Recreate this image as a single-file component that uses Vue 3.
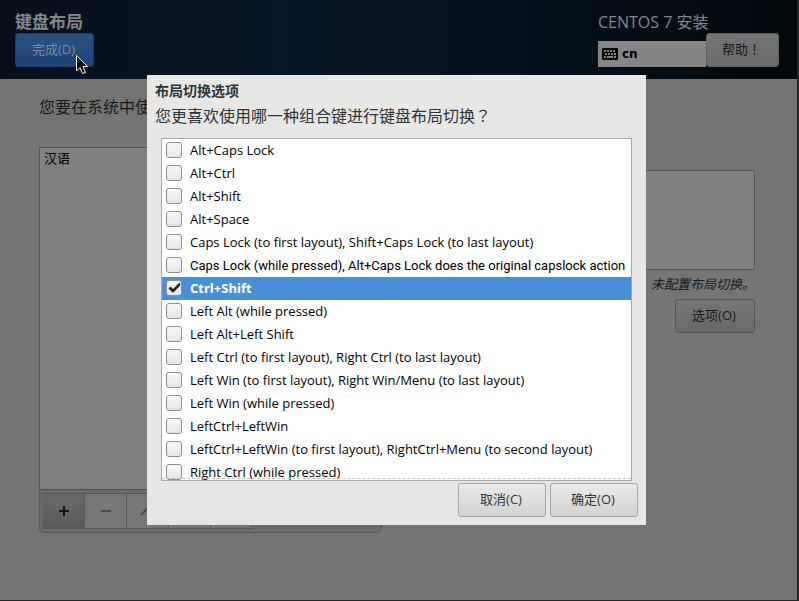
<template>
  <div class="screen">
    <header class="topbar">
      <div class="topbar-left">
        <h1 class="spoke-title">键盘布局</h1>
        <button class="btn btn-done" type="button">完成(D)</button>
      </div>
      <div class="topbar-right">
        <div class="product">CENTOS 7 安装</div>
        <div class="topbar-tools">
          <div class="kbd-indicator">
            <svg class="kbd-icon" viewBox="0 0 16 12" aria-hidden="true">
              <rect width="16" height="12" rx="1" fill="#000" />
              <path d="M2 3h12M3 6h11" stroke="#858585" stroke-width="2" stroke-dasharray="2 1" />
              <path d="M2 9h2M5 9h6M12 9h2" stroke="#858585" stroke-width="2" />
            </svg>
            <span>cn</span>
          </div>
          <button class="btn btn-help" type="button">帮助<span class="mark">！</span></button>
        </div>
      </div>
    </header>

    <main class="content">
      <p class="question">您要在系统中使</p>
      <div class="columns">
        <section class="layouts">
          <ul class="layout-list">
            <li>汉语</li>
          </ul>
          <div class="toolbar">
            <button v-for="tool in tools" :key="tool.name" class="tool" type="button"
                    :class="{ active: tool.enabled }" :aria-label="tool.name">
              <svg viewBox="0 0 16 16" aria-hidden="true"><path :d="tool.path" /></svg>
            </button>
          </div>
        </section>
        <section class="test">
          <textarea aria-label="测试布局配置"></textarea>
          <p class="switch-note">未配置布局切换。</p>
          <button class="btn btn-options" type="button">选项(O)</button>
        </section>
      </div>
    </main>

    <div class="overlay">
      <div class="dialog" role="dialog" aria-labelledby="dialog-title">
        <h2 id="dialog-title" class="dialog-title">布局切换选项</h2>
        <p class="dialog-text">您更喜欢使用哪一种组合键进行键盘布局切换<span class="mark">？</span></p>
        <div class="option-frame">
          <div class="option-list">
            <label v-for="option in options" :key="option" class="option"
                   :class="{ selected: chosen.includes(option), long: option.length > 70 }">
              <span class="check">
                <input v-model="chosen" type="checkbox" :value="option">
                <svg v-if="chosen.includes(option)" viewBox="0 0 16 16" aria-hidden="true">
                  <path d="M2.500 8.500 L4.500 6.500 L7 9 L13.500 2.500 L14.500 5 L7.500 12.500 H6.500 Z" />
                </svg>
              </span>
              <span>{{ option }}</span>
            </label>
          </div>
        </div>
        <div class="dialog-actions">
          <button class="btn" type="button">取消(C)</button>
          <button class="btn" type="button">确定(O)</button>
        </div>
      </div>
    </div>

    <svg class="pointer" viewBox="0 0 14 21" aria-hidden="true">
      <path d="M1.500 1.500 V17 L5 13.500 L7.500 19.500 L10.500 18.500 L8 12.500 H12.500 Z" />
    </svg>
  </div>
</template>

<script setup>
import { ref } from 'vue'

const options = [
  'Alt+Caps Lock',
  'Alt+Ctrl',
  'Alt+Shift',
  'Alt+Space',
  'Caps Lock (to first layout), Shift+Caps Lock (to last layout)',
  'Caps Lock (while pressed), Alt+Caps Lock does the original capslock action',
  'Ctrl+Shift',
  'Left Alt (while pressed)',
  'Left Alt+Left Shift',
  'Left Ctrl (to first layout), Right Ctrl (to last layout)',
  'Left Win (to first layout), Right Win/Menu (to last layout)',
  'Left Win (while pressed)',
  'LeftCtrl+LeftWin',
  'LeftCtrl+LeftWin (to first layout), RightCtrl+Menu (to second layout)',
  'Right Ctrl (while pressed)'
]

const chosen = ref(['Ctrl+Shift'])

const tools = [
  { name: '添加', enabled: true, path: 'M3 8H13M8 3V13' },
  { name: '删除', enabled: false, path: 'M3 8H13' },
  { name: '上移', enabled: false, path: 'M1 12L8 5L15 12' },
  { name: '下移', enabled: false, path: 'M1 5L8 12L15 5' },
  { name: '预览', enabled: false, path: 'M2 4H14V12H2Z' }
]
</script>

<style>
body {
  margin: 0;
  background: #747474;
}
</style>

<style scoped>
.screen {
  position: relative;
  box-sizing: border-box;
  min-height: 100vh;
  border-right: 2px solid #252525;
  border-bottom: 1px solid #252525;
  background: #747474;
  color: #171a1b;
  font-family: "Open Sans", "Noto Sans CJK SC", sans-serif;
  font-size: 13px;
  overflow: hidden;
}

h1, h2, p, ul {
  margin: 0;
  padding: 0;
}

.mark {
  font-family: "Noto Sans CJK TC", sans-serif;
  line-height: 1;
}

.topbar {
  display: flex;
  justify-content: space-between;
  box-sizing: border-box;
  height: 79px;
  padding: 11px 18px 12px 15px;
  background: linear-gradient(90deg, #070f1c 0%, #08172a 35%, #05111d 70%, #02090c 100%);
}

.topbar-left,
.topbar-right {
  display: flex;
  flex-direction: column;
  justify-content: space-between;
  align-items: flex-start;
}

.spoke-title {
  color: #858789;
  font-size: 17px;
  line-height: 22px;
}

.product {
  color: #858789;
  font-size: 16px;
  line-height: 22px;
}

.topbar-tools {
  display: flex;
  align-items: flex-end;
}

.kbd-indicator {
  display: flex;
  align-items: center;
  gap: 4px;
  box-sizing: border-box;
  width: 108px;
  height: 26px;
  padding-left: 4px;
  background: #858585;
  color: #000;
  font-family: "DejaVu Sans", sans-serif;
  font-size: 12px;
  font-weight: bold;
}

.kbd-icon {
  width: 16px;
  height: 12px;
}

.btn {
  box-sizing: border-box;
  width: 88px;
  height: 34px;
  padding: 0 2px 3px 0;
  border: 1px solid #a6a6a6;
  border-radius: 3px;
  background: linear-gradient(#eaeaea, #d3d3d2);
  color: #2e3436;
  font: inherit;
}

.btn-done {
  width: 79px;
  border-color: #173f6b;
  background: linear-gradient(#275482, #1c4474);
  color: #7f8b97;
}

.btn-help {
  width: 73px;
  border-color: #606060;
  background: linear-gradient(#757575, #696969);
  color: #171a1b;
}

.content {
  padding: 16px 42px 0 39px;
}

.question {
  font-size: 16px;
  line-height: 24px;
}

.columns {
  display: flex;
  justify-content: space-between;
  gap: 32px;
  padding-top: 28px;
}

.layouts {
  flex: 0 1 343px;
}

.layout-list {
  box-sizing: border-box;
  height: 343px;
  border: 1px solid #545454;
  background: #808080;
  color: #000;
  list-style: none;
}

.layout-list li {
  padding: 0 4px;
  line-height: 20px;
}

.toolbar {
  display: flex;
  padding: 3px;
  border: 1px solid #575757;
  border-top: 0;
  border-radius: 0 0 5px 5px;
  background: #6b6b6a;
}

.tool {
  display: grid;
  place-items: center;
  box-sizing: border-box;
  width: 42px;
  height: 36px;
  padding: 0;
  border: 1px solid #5b5b5b;
  border-left: 0;
  background: #767676;
}

.tool.active {
  background: linear-gradient(#6a6a69, #5b5b59);
}

.tool svg {
  width: 16px;
  height: 16px;
  fill: none;
  stroke: #464849;
  stroke-width: 2;
}

.tool.active svg {
  stroke: #101213;
}

.test {
  display: flex;
  flex: 0 1 341px;
  flex-direction: column;
  align-items: flex-end;
  padding-top: 23px;
}

.test textarea {
  box-sizing: border-box;
  width: 100%;
  height: 100px;
  border: 1px solid #555;
  border-radius: 2px;
  background: #808080;
  font: inherit;
  resize: none;
}

.switch-note {
  font-style: italic;
  line-height: 29px;
}

.btn-options {
  width: 80px;
  border-color: #545454;
  background: linear-gradient(#757574, #696968);
  color: #171a1b;
}

.overlay {
  position: absolute;
  inset: 0;
  display: flex;
  align-items: center;
  justify-content: center;
  padding-right: 4px;
}

.dialog {
  box-sizing: border-box;
  width: 499px;
  max-width: 100%;
  padding: 4px 8px 8px;
  background: #e7e7e6;
  color: #2e3436;
}

.dialog-title {
  font-size: 14px;
  line-height: 24px;
}

.dialog-text {
  font-size: 16px;
  line-height: 26px;
}

.option-frame {
  position: relative;
  margin: 9px 6px 2px;
  border: 1px solid #a9a9a7;
  background: #fff;
}

.option-frame::after {
  content: "";
  position: absolute;
  right: 0;
  bottom: 1px;
  left: 0;
  border-top: 1px dashed #c4c4c4;
}

.option-list {
  height: 341px;
  overflow: hidden;
}

.option {
  display: flex;
  align-items: center;
  gap: 8px;
  box-sizing: border-box;
  height: 23px;
  padding: 0 4px 1px;
  color: #000;
  white-space: nowrap;
}

.option.long {
  font-family: Roboto, sans-serif;
}

.option.selected {
  background: #4a90d9;
  color: #fff;
  font-weight: bold;
}

.check {
  display: grid;
  flex: none;
  width: 16px;
  height: 16px;
}

.check input,
.check svg {
  grid-area: 1 / 1;
  box-sizing: border-box;
  width: 16px;
  height: 16px;
  margin: 0;
}

.check input {
  appearance: none;
  border: 1px solid #8e8e8e;
  border-radius: 3px;
  background: linear-gradient(#f7f7f7, #e6e6e6);
}

.check svg {
  z-index: 1;
  fill: #1e2426;
  pointer-events: none;
}

.dialog-actions {
  display: flex;
  justify-content: flex-end;
  gap: 4px;
}

.pointer {
  position: absolute;
  top: 54px;
  left: 75px;
  width: 14px;
  height: 21px;
  fill: #080808;
  stroke: #fff;
  stroke-width: 1;
}
</style>
